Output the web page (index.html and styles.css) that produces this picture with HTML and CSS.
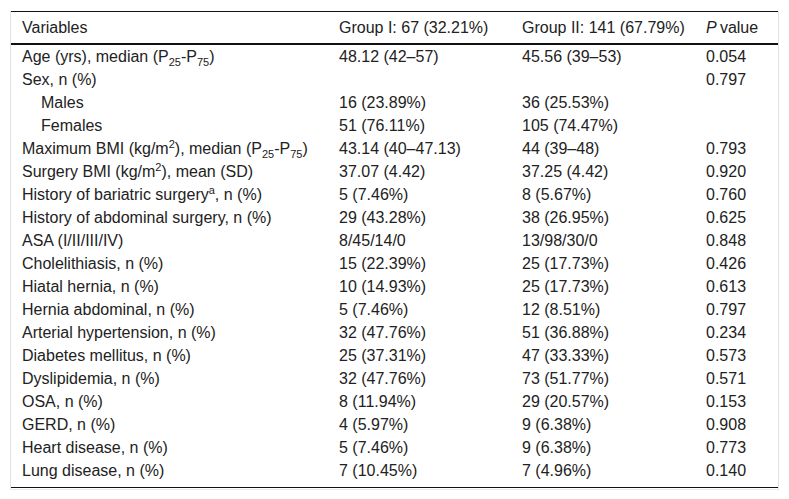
FILE: index.html
```html
<!DOCTYPE html>
<html lang="en">
<head>
<meta charset="utf-8">
<title>Table</title>
<link rel="stylesheet" href="styles.css">
</head>
<body>
<div class="frame">
<table class="data">
<colgroup>
<col class="c-var"><col class="c-g1"><col class="c-g2"><col class="c-p">
</colgroup>
<thead>
<tr><th>Variables</th><th>Group I: 67 (32.21%)</th><th>Group II: 141 (67.79%)</th><th><i>P</i>&#8201;value</th></tr>
</thead>
<tbody>
<tr><td>Age (yrs), median (P<sub>25</sub>-P<sub>75</sub>)</td><td>48.12 (42–57)</td><td>45.56 (39–53)</td><td>0.054</td></tr>
<tr><td>Sex, n (%)</td><td></td><td></td><td>0.797</td></tr>
<tr><td class="indent">Males</td><td>16 (23.89%)</td><td>36 (25.53%)</td><td></td></tr>
<tr><td class="indent">Females</td><td>51 (76.11%)</td><td>105 (74.47%)</td><td></td></tr>
<tr><td>Maximum BMI (kg/m<sup>2</sup>), median (P<sub>25</sub>-P<sub>75</sub>)</td><td>43.14 (40–47.13)</td><td>44 (39–48)</td><td>0.793</td></tr>
<tr><td>Surgery BMI (kg/m<sup>2</sup>), mean (SD)</td><td>37.07 (4.42)</td><td>37.25 (4.42)</td><td>0.920</td></tr>
<tr><td>History of bariatric surgery<sup>a</sup>, n (%)</td><td>5 (7.46%)</td><td>8 (5.67%)</td><td>0.760</td></tr>
<tr><td>History of abdominal surgery, n (%)</td><td>29 (43.28%)</td><td>38 (26.95%)</td><td>0.625</td></tr>
<tr><td>ASA (I/II/III/IV)</td><td>8/45/14/0</td><td>13/98/30/0</td><td>0.848</td></tr>
<tr><td>Cholelithiasis, n (%)</td><td>15 (22.39%)</td><td>25 (17.73%)</td><td>0.426</td></tr>
<tr><td>Hiatal hernia, n (%)</td><td>10 (14.93%)</td><td>25 (17.73%)</td><td>0.613</td></tr>
<tr><td>Hernia abdominal, n (%)</td><td>5 (7.46%)</td><td>12 (8.51%)</td><td>0.797</td></tr>
<tr><td>Arterial hypertension, n (%)</td><td>32 (47.76%)</td><td>51 (36.88%)</td><td>0.234</td></tr>
<tr><td>Diabetes mellitus, n (%)</td><td>25 (37.31%)</td><td>47 (33.33%)</td><td>0.573</td></tr>
<tr><td>Dyslipidemia, n (%)</td><td>32 (47.76%)</td><td>73 (51.77%)</td><td>0.571</td></tr>
<tr><td>OSA, n (%)</td><td>8 (11.94%)</td><td>29 (20.57%)</td><td>0.153</td></tr>
<tr><td>GERD, n (%)</td><td>4 (5.97%)</td><td>9 (6.38%)</td><td>0.908</td></tr>
<tr><td>Heart disease, n (%)</td><td>5 (7.46%)</td><td>9 (6.38%)</td><td>0.773</td></tr>
<tr class="last"><td>Lung disease, n (%)</td><td>7 (10.45%)</td><td>7 (4.96%)</td><td>0.140</td></tr>
</tbody>
</table>
</div>
</body>
</html>
```
FILE: styles.css
```css
html, body {
  margin: 0;
  padding: 0;
  background: #fff;
}
body {
  font-family: "Liberation Sans", Arial, sans-serif;
  font-size: 16px;
  color: #222;
}
.frame {
  margin: 11px 0 0 10px;
  width: 767px;
  border-left: 1px solid #e2e2e2;
  border-right: 1px solid #e2e2e2;
  border-bottom: 1px solid #ececec;
  padding-bottom: 1px;
}
.data {
  width: 767px;
  table-layout: fixed;
  border-collapse: collapse;
  border-top: 1px solid #111;
  border-bottom: 1px solid #111;
}
.c-var { width: 317px; }
.c-g1 { width: 183px; }
.c-g2 { width: 184px; }
.c-p { width: 83px; }
.data th {
  font-weight: normal;
  text-align: left;
  height: 31px;
  padding: 0 0 0 11px;
  border-bottom: 2px solid #111;
  white-space: nowrap;
  line-height: 31px;
}
.data td {
  height: 23px;
  padding: 0 0 0 11px;
  line-height: 23px;
  white-space: nowrap;
  vertical-align: top;
}
.data td.indent {
  padding-left: 30px;
}
.data tr.last td {
  height: 28px;
}
.data sub, .data sup {
  font-size: 11px;
  line-height: 0;
}
.data i {
  font-style: italic;
}
```
